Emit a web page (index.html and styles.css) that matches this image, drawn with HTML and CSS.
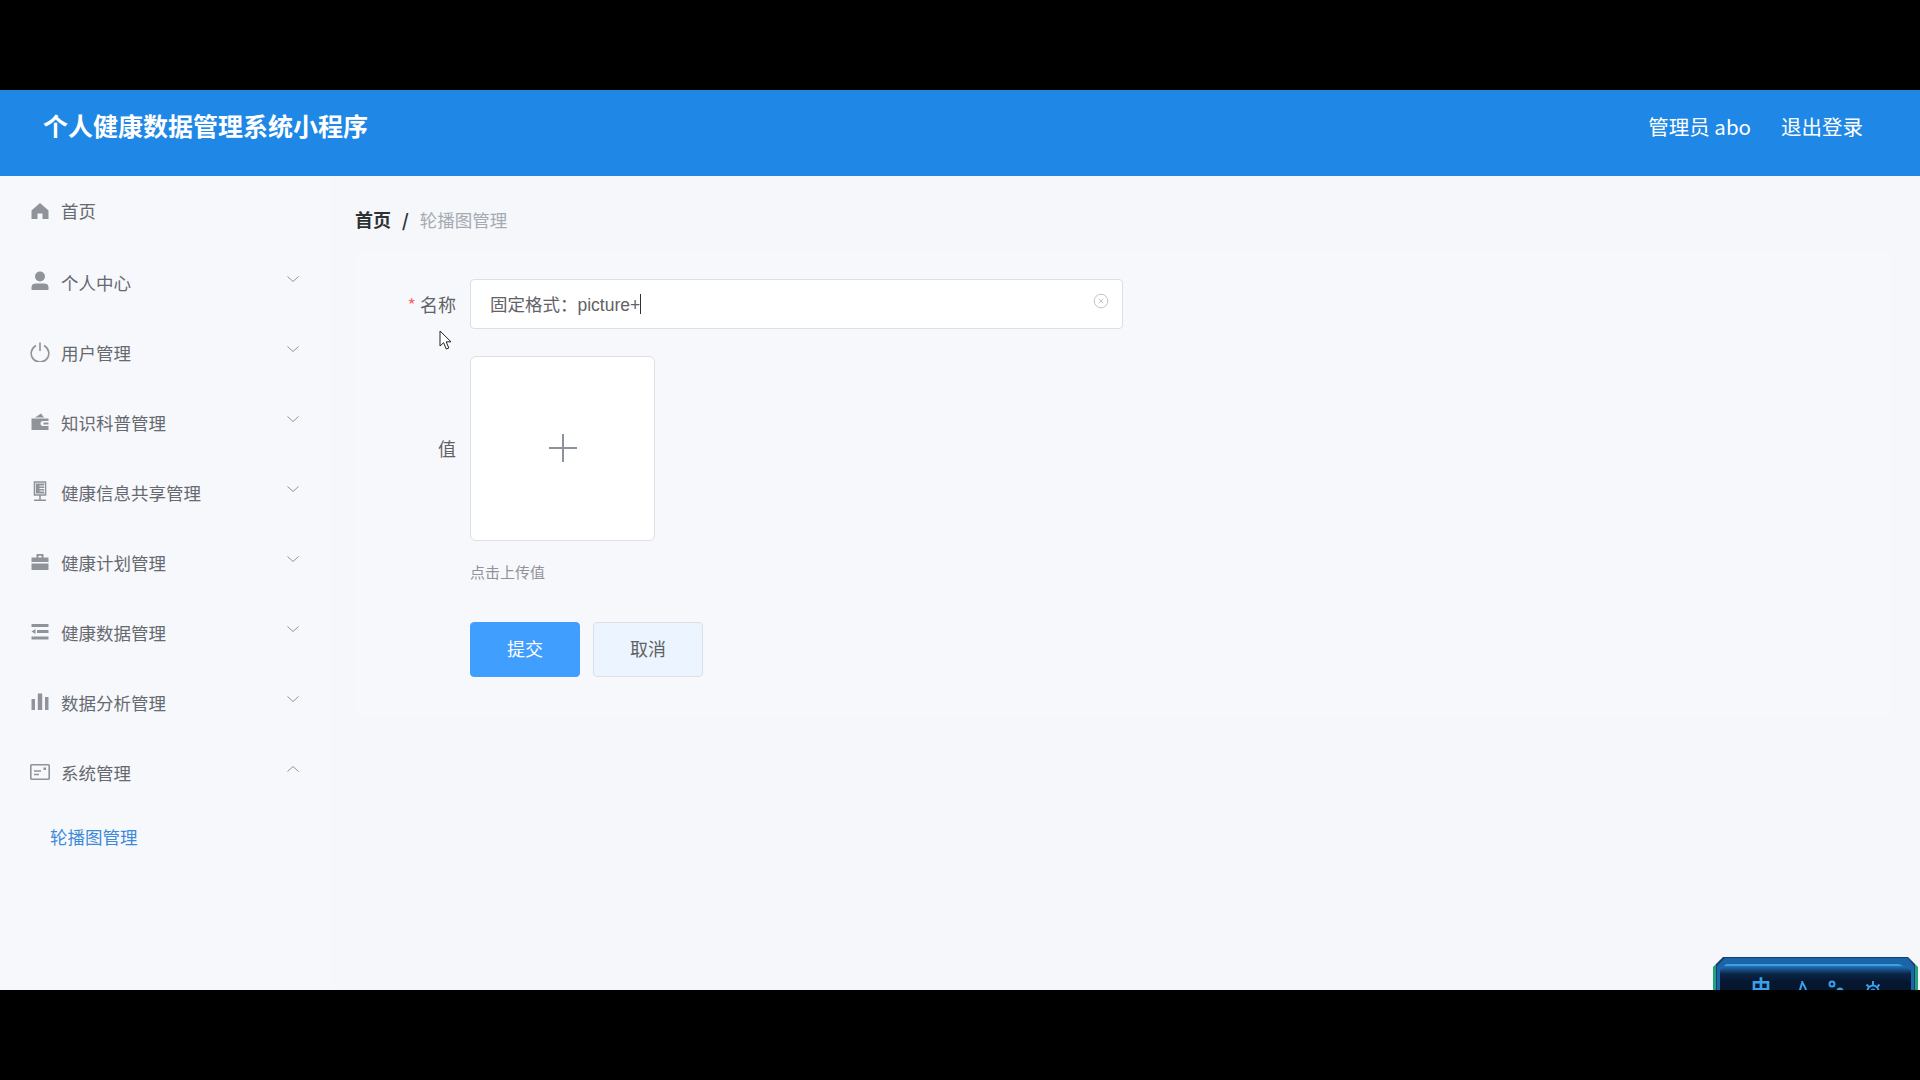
FILE: index.html
```html
<!DOCTYPE html>
<html lang="zh-CN">

<head>
  <meta charset="UTF-8">
  <title>个人健康数据管理系统小程序</title>
  <link rel="stylesheet" href="styles.css">
</head>

<body>
  <div class="screen">
    <header class="topbar">
      <h1 class="brand">个人健康数据管理系统小程序</h1>
      <div class="user">
        <span>管理员 abo</span>
        <span>退出登录</span>
      </div>
    </header>

    <div class="layout">
      <nav class="sidebar">
        <div class="nav-item nav-first">
          <svg class="nav-icon" viewBox="0 0 18 18"><path d="M9 1 0.500 8.500V17H6.500V11.500H11.500V17H17.500V8.500Z" /></svg>
          <span>首页</span>
        </div>
        <div class="nav-item">
          <svg class="nav-icon nav-icon-tall" viewBox="0 0 18 20"><circle cx="9" cy="5.500" r="5" /><path d="M0.500 19V16C0.500 13.500 2.500 12.500 5 12.500H13C15.500 12.500 17.500 13.500 17.500 16V19Z" /></svg>
          <span>个人中心</span>
          <svg class="chevron" viewBox="0 0 12 6"><path d="M0.500 0.500 6 5.500 11.500 0.500" /></svg>
        </div>
        <div class="nav-item">
          <svg class="nav-icon nav-icon-wide" viewBox="0 0 20 20"><path class="line" d="M6 3.500A8.800 8.800 0 1 0 14 3.500M10 0.500V9" /></svg>
          <span>用户管理</span>
          <svg class="chevron" viewBox="0 0 12 6"><path d="M0.500 0.500 6 5.500 11.500 0.500" /></svg>
        </div>
        <div class="nav-item">
          <svg class="nav-icon" viewBox="0 0 18 18"><path d="M4 4.500 10 0.500 13 4.500ZM0.500 5.500H17.500V8H12C10 8 9.500 9.500 9.500 10.500C9.500 11.500 10 13 12 13H17.500V17H0.500ZM12.500 9.500H17.500V11.500H12.500Z" /></svg>
          <span>知识科普管理</span>
          <svg class="chevron" viewBox="0 0 12 6"><path d="M0.500 0.500 6 5.500 11.500 0.500" /></svg>
        </div>
        <div class="nav-item">
          <svg class="nav-icon nav-icon-tall" viewBox="0 0 18 20"><path class="line" d="M3.500 1H14.500V14H3.500ZM9 14V18.500M3 19.200H15" /><path d="M5 2.500H13V12.500H5Z" /><path class="cut" d="M8.500 5H14M8.500 7.500H14M8.500 10H14" /></svg>
          <span>健康信息共享管理</span>
          <svg class="chevron" viewBox="0 0 12 6"><path d="M0.500 0.500 6 5.500 11.500 0.500" /></svg>
        </div>
        <div class="nav-item">
          <svg class="nav-icon" viewBox="0 0 18 18"><path d="M5.500 1H12.500V4.500H17.500V9H0.500V4.500H5.500ZM7.500 2.800V4.500H10.500V2.800ZM0.500 10.500H17.500V17H0.500Z" /></svg>
          <span>健康计划管理</span>
          <svg class="chevron" viewBox="0 0 12 6"><path d="M0.500 0.500 6 5.500 11.500 0.500" /></svg>
        </div>
        <div class="nav-item">
          <svg class="nav-icon" viewBox="0 0 18 18"><path d="M0.500 1H17.500V4H0.500ZM6 7H17.500V10H6ZM0.500 8.500 4.500 6V11ZM0.500 13.500H17.500V16.500H0.500Z" /></svg>
          <span>健康数据管理</span>
          <svg class="chevron" viewBox="0 0 12 6"><path d="M0.500 0.500 6 5.500 11.500 0.500" /></svg>
        </div>
        <div class="nav-item">
          <svg class="nav-icon" viewBox="0 0 18 18"><path d="M0.500 6H4V17H0.500ZM6.800 0.500H11.200V17H6.800ZM14 4H17.500V17H14Z" /></svg>
          <span>数据分析管理</span>
          <svg class="chevron" viewBox="0 0 12 6"><path d="M0.500 0.500 6 5.500 11.500 0.500" /></svg>
        </div>
        <div class="nav-item">
          <svg class="nav-icon nav-icon-wide" viewBox="0 0 20 16"><path class="line" d="M1.500 0.800H18.500A0.700 0.700 0 0 1 19.200 1.500V14.500A0.700 0.700 0 0 1 18.500 15.200H1.500A0.700 0.700 0 0 1 0.800 14.500V1.500A0.700 0.700 0 0 1 1.500 0.800ZM4 7H11M4 10.500H9" /><rect x="13.500" y="3.500" width="2.500" height="2.500" /></svg>
          <span>系统管理</span>
          <svg class="chevron chevron-up" viewBox="0 0 12 6"><path d="M0.500 5.500 6 0.500 11.500 5.500" /></svg>
        </div>
        <div class="sub-item">轮播图管理</div>
      </nav>

      <main class="content">
        <div class="crumbs">
          <b>首页</b>
          <i>/</i>
          <span>轮播图管理</span>
        </div>

        <form class="panel">
          <div class="field">
            <label class="field-label"><em>*</em> 名称</label>
            <div class="input">
              <span>固定格式：picture+</span><span class="caret"></span>
              <svg class="clear" viewBox="0 0 16 16"><circle cx="8" cy="8" r="6.800" /><path d="M5.800 5.800 10.200 10.200M10.200 5.800 5.800 10.200" /></svg>
            </div>
          </div>

          <div class="field field-upload">
            <label class="field-label">值</label>
            <div class="upload">
              <svg class="plus" viewBox="0 0 28 28"><path d="M14 0V28M0 14H28" /></svg>
            </div>
          </div>

          <div class="tip">点击上传值</div>

          <div class="actions">
            <button class="btn btn-primary" type="button">提交</button>
            <button class="btn" type="button">取消</button>
          </div>
        </form>
      </main>
    </div>

    <svg class="cursor" viewBox="0 0 14 21"><path d="M1 1V16L4.600 12.700 7.300 19 9.800 18 7.200 11.800H12Z" /></svg>

    <div class="ime">
      <div class="ime-band">
        <div class="ime-inner">
          <span class="ime-zh">中</span>
          <svg class="ime-icon" viewBox="0 0 20 20"><path d="M9 1C9.500 5 15 8 13 15M9 3 4 20" /></svg>
          <svg class="ime-icon" viewBox="0 0 20 20"><circle cx="6" cy="4" r="2.500" /><circle class="solid" cx="14" cy="11" r="2.500" /></svg>
          <svg class="ime-icon ime-gear" viewBox="0 0 20 20"><circle cx="10" cy="11" r="5.500" /><circle class="solid" cx="10" cy="11" r="1.500" /><path d="M10 1V5.500M10 16.500V20M0.500 11H4.500M15.500 11H19.500M3.500 4.500 6.500 7.500M16.500 4.500 13.500 7.500" /></svg>
        </div>
      </div>
    </div>
  </div>
</body>

</html>
```

FILE: styles.css
```css
* {
  box-sizing: border-box;
}

body {
  margin: 0;
  height: 1080px;
  padding: 90px 0;
  background: #000;
  overflow: hidden;
  font-family: "Noto Sans CJK SC", "Noto Sans", sans-serif;
}

.screen {
  position: relative;
  height: 900px;
  overflow: hidden;
  background: #f5f7fa;
  display: flex;
  flex-direction: column;
}

.topbar {
  height: 86px;
  flex: none;
  background: #1f87e5;
  color: #fff;
  display: flex;
  justify-content: space-between;
  padding: 0 57px 0 43px;
}

.brand {
  margin: 0;
  font-size: 25px;
  line-height: 70px;
  font-weight: 700;
}

.user {
  display: flex;
  gap: 30px;
  font-size: 20.5px;
  line-height: 73px;
}

.layout {
  flex: 1;
  display: flex;
  min-height: 0;
}

.sidebar {
  width: 330px;
  flex: none;
  background: #f7f8fc;
  color: #666a70;
  font-size: 17.5px;
}

.nav-item {
  height: 70px;
  display: flex;
  align-items: center;
  padding-left: 31px;
  position: relative;
}

.nav-first {
  height: 71px;
  padding-bottom: 2px;
}

.nav-icon {
  width: 18px;
  height: 18px;
  margin-right: 12px;
  fill: #909399;
  flex: none;
}

.nav-icon .line {
  fill: none;
  stroke: #909399;
  stroke-width: 1.6;
}

.nav-icon .cut {
  fill: none;
  stroke: #f7f8fc;
  stroke-width: 1;
}

.nav-icon-tall {
  height: 20px;
  margin-top: -2px;
}

.nav-icon-wide {
  width: 20px;
  height: 20px;
  margin-left: -1px;
  margin-right: 11px;
}

.chevron {
  position: absolute;
  left: 287px;
  top: 29px;
  width: 12px;
  height: 6px;
  fill: none;
  stroke: #909399;
  stroke-width: 1;
}

.sub-item {
  padding-left: 50px;
  line-height: 60px;
  color: #3d8ad8;
}

.content {
  flex: 1;
  min-width: 0;
  padding: 29px 30px 0 25px;
}

.crumbs {
  display: flex;
  align-items: center;
  gap: 11px;
  height: 28px;
  font-size: 17.5px;
  color: #a5aab3;
}

.crumbs b {
  font-size: 18px;
  color: #303133;
}

.crumbs i {
  color: #303133;
  font-style: normal;
  font-weight: 700;
}

.panel {
  margin-top: 18px;
  padding: 28px 0 40px;
  background: #f7f8fc;
}

.field {
  display: flex;
  align-items: center;
  height: 50px;
  margin-bottom: 26px;
}

.field-upload {
  height: 186px;
  margin-bottom: 0;
}

.field-label {
  width: 115px;
  padding-right: 14px;
  text-align: right;
  font-size: 18px;
  color: #606266;
}

.field-label em {
  color: #f56c6c;
  font-style: normal;
}

.input {
  position: relative;
  width: 653px;
  height: 50px;
  background: #fff;
  border: 1px solid #dcdfe6;
  border-radius: 4px;
  padding: 0 0 1px 19px;
  display: flex;
  align-items: center;
  font-family: "Liberation Sans", "Noto Sans CJK SC", sans-serif;
  font-size: 17.5px;
  color: #606266;
}

.caret {
  width: 1px;
  height: 20px;
  background: #303133;
}

.clear {
  position: absolute;
  right: 13px;
  top: 13px;
  width: 16px;
  height: 16px;
  fill: none;
  stroke: #c0c4cc;
  stroke-width: 1;
}

.upload {
  width: 185px;
  height: 185px;
  background: #fff;
  border: 1px solid #dcdfe6;
  border-radius: 6px;
  display: flex;
  align-items: center;
  justify-content: center;
}

.plus {
  width: 28px;
  height: 28px;
  fill: none;
  stroke: #8c939d;
  stroke-width: 2;
}

.tip {
  margin: 20px 0 0 115px;
  font-size: 15px;
  line-height: 22px;
  color: #909399;
}

.actions {
  display: flex;
  gap: 13px;
  margin: 39px 0 0 115px;
}

.btn {
  width: 110px;
  height: 55px;
  padding: 0 0 3px;
  font: inherit;
  font-size: 18px;
  color: #606266;
  background: #ecf5ff;
  border: 1px solid #dcdfe6;
  border-radius: 4px;
}

.btn-primary {
  color: #fff;
  background: #409eff;
  border-color: #409eff;
}

.cursor {
  position: absolute;
  left: 439px;
  top: 240px;
  width: 14px;
  height: 21px;
  fill: #fff;
  stroke: #222;
  stroke-width: 1;
}

/* input method toolbar, cut off by the bottom band */
.ime {
  position: absolute;
  left: 1713px;
  top: 867px;
  width: 205px;
  height: 60px;
  padding: 1px;
  background: linear-gradient(90deg, #1fa37a 0 3px, #17406e 3px 202px, #1fa37a 202px);
  clip-path: polygon(10px 0, 195px 0, 100% 10px, 100% 100%, 0 100%, 0 10px);
}

.ime-band {
  height: 100%;
  margin: 0 3px;
  padding: 6px 3px 0;
  background: #1c64a8;
  clip-path: polygon(8px 0, 191px 0, 100% 8px, 100% 100%, 0 100%, 0 8px);
}

.ime-inner {
  height: 100%;
  padding: 7px 0 0 31px;
  display: flex;
  color: #3aa0ea;
  border-top: 2px solid #3c9fe4;
  background: linear-gradient(#2274bb 0, #0a2547 8px, #07162f 16px);
  clip-path: polygon(6px 0, 179px 0, 100% 6px, 100% 100%, 0 100%, 0 6px);
}

.ime-zh {
  width: 20px;
  margin-right: 22px;
  font-size: 20px;
  line-height: 28px;
  font-weight: 700;
}

.ime-icon {
  width: 20px;
  height: 20px;
  margin: 7px 13px 0 0;
  flex: none;
  fill: none;
  stroke: #3aa0ea;
  stroke-width: 2;
}

.ime-icon .solid {
  fill: #3aa0ea;
}

.ime-gear {
  margin-left: 4px;
}
```
